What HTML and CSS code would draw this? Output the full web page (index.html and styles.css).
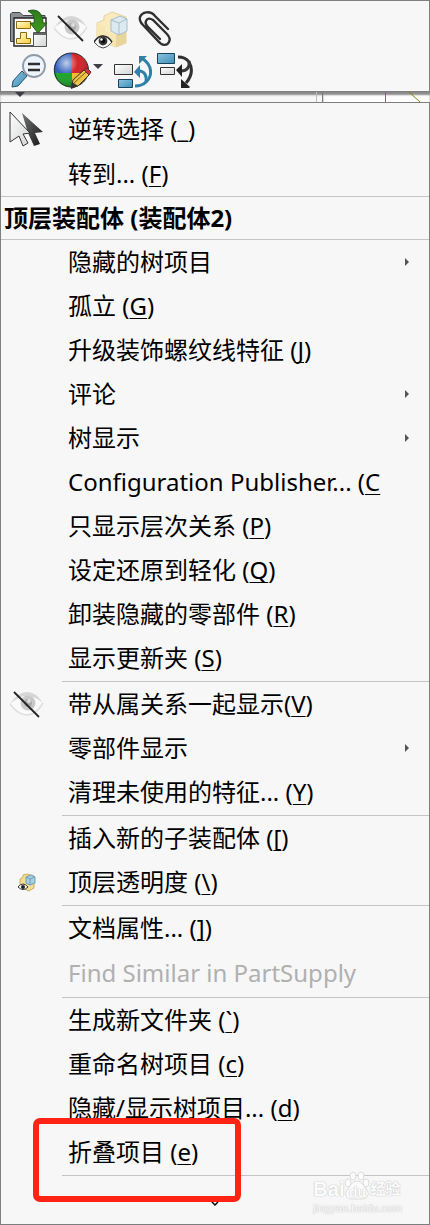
FILE: index.html
```html
<!DOCTYPE html>
<html lang="zh-CN">
<head>
<meta charset="utf-8">
<meta name="viewport" content="width=device-width, initial-scale=1">
<title>装配体2</title>
<link rel="stylesheet" href="styles.css">
</head>
<body>
<svg class="defs" aria-hidden="true">
  <defs>
    <linearGradient id="gold" x1="0" y1="0" x2="1" y2="1"><stop offset="0" stop-color="#fffbe0"/><stop offset="1" stop-color="#ffcf33"/></linearGradient>
    <linearGradient id="steel" x1="0" y1="0" x2="1" y2="1"><stop offset="0" stop-color="#8cc3e0"/><stop offset="1" stop-color="#3f8fb5"/></linearGradient>
    <linearGradient id="pale" x1="0" y1="0" x2="1" y2="1"><stop offset="0" stop-color="#ffffff"/><stop offset="1" stop-color="#d2d4d4"/></linearGradient>
    <linearGradient id="dark" x1="0" y1="0" x2="1" y2="1"><stop offset="0" stop-color="#777"/><stop offset="1" stop-color="#151515"/></linearGradient>
    <linearGradient id="leaf" x1="0" y1="0" x2="0" y2="1"><stop offset="0" stop-color="#2f7a22"/><stop offset="1" stop-color="#3f9a1c"/></linearGradient>
    <radialGradient id="shine" cx="0.35" cy="0.3" r="0.75"><stop offset="0" stop-color="#fff" stop-opacity="0.7"/><stop offset="0.45" stop-color="#fff" stop-opacity="0.05"/><stop offset="1" stop-color="#000" stop-opacity="0.3"/></radialGradient>
    <symbol id="eye-off" viewBox="0 0 34 28">
      <path d="M0 14Q8 3 17 3T34 14Q26 25 17 25T0 14Z" fill="#fafafa"/>
      <path d="M0 14Q8 2 17 2T33 13Q25 6 17 6T0 14Z" fill="#d6d6d6"/>
      <path d="M0 14Q8 25 17 25T33 13" fill="none" stroke="#dedede" stroke-width="1.5"/>
      <circle cx="18" cy="13" r="7.5" fill="#c9c9c9"/><circle cx="18" cy="13" r="4" fill="#ababab"/><circle cx="19" cy="11" r="2" fill="#ddd"/>
      <path d="M4 2L29 27" stroke="#222" stroke-width="1.8"/>
    </symbol>
    <symbol id="part" viewBox="0 0 36 38">
      <path d="M3 12L10 9V5L18 1L32 6V32L22 36L3 29Z" fill="#f9ebbf" stroke="#e5d39a"/>
      <path d="M3 12L11 15V20L22 24V36L3 29Z" fill="#f6e6b2"/>
      <path d="M22 24L32 19V32L22 36Z" fill="#e8d59b"/>
      <path d="M17 9L26 5L33 8V20L25 24L17 20Z" fill="#dce9f0" stroke="#a4bfcd"/>
      <path d="M17 9L25 12L33 8M25 12V24" fill="none" stroke="#a4bfcd"/>
      <path d="M0 31Q4 25 9 25T18 31Q13 37 9 37T0 31Z" fill="#fff" stroke="#444"/>
      <path d="M0 31Q4 25 9 25T18 31" fill="none" stroke="#333" stroke-width="1.6"/>
      <circle cx="9" cy="30" r="4.4" fill="#333"/><circle cx="9" cy="30" r="2" fill="#000"/><circle cx="7.5" cy="28.5" r="1.2" fill="#fff"/>
    </symbol>
    <symbol id="part-small" viewBox="0 0 18 19">
      <path d="M2 6L5 4V2L9 1L16 3V15L11 18L2 14Z" fill="#f3dc93" stroke="#c9ae62"/>
      <path d="M8 4L13 2L17 4V10L12 12L8 10Z" fill="#a9cfe2" stroke="#6d9fb8"/>
      <path d="M8 4L12 6L17 4M12 6V12" fill="none" stroke="#6d9fb8"/>
      <path d="M0 14Q5 8 10 14Q5 19 0 14Z" fill="#fff" stroke="#333"/><circle cx="5" cy="14" r="2" fill="#222"/>
    </symbol>
  </defs>
</svg>

<main class="screen">
  <div class="toolbar" role="toolbar" aria-label="快捷工具">
    <div class="tool-row">
      <button class="tool" type="button" aria-label="打开零件">
        <svg viewBox="8 8 42 42"><path d="M10.500 41.500V14L12 12.500H20L23 15.500H45V20H15V41.500Z" fill="#8d9195" stroke="#444"/>
          <path d="M14 18H46V46H14Z" fill="#fff" stroke="#222" stroke-width="1.4"/>
          <path d="M16.500 21.500H30.500V28.500H16.500Z" fill="url(#gold)" stroke="#8a6a14"/>
          <path d="M20.500 32.500H26.500V38.500H30.500V43.500H16.500V38.500H20.500Z" fill="url(#gold)" stroke="#8a6a14"/>
          <path d="M33.500 32.500H46.500V46.500H33.500Z" fill="url(#pale)" stroke="#555"/><path d="M34 34H46" stroke="#666" stroke-width="2"/>
          <path d="M28 11C36 8 43 12 43 23H47L38 33L30 23H34C35 17 33 14 28 11Z" fill="url(#leaf)" stroke="#225d18"/></svg>
      </button>
      <button class="tool" type="button" aria-label="隐藏零部件"><svg viewBox="50 8 42 42"><use href="#eye-off" x="54" y="14" width="34" height="28"/></svg></button>
      <button class="tool" type="button" aria-label="更改透明度"><svg viewBox="92 8 42 42"><use href="#part" x="94" y="11" width="36" height="38"/></svg></button>
      <button class="tool" type="button" aria-label="附件">
        <svg viewBox="134 8 42 42"><path d="M168 29L155 16C150 10 142 12 140 17C139 21 141 23 143 25L158 41C162 46 167 46 169 42C171 39 169 36 166 33L153 20C150 18 147 18 146 21C145 23 146 25 148 27L160 39" fill="none" stroke="#303030" stroke-width="2.4" stroke-linecap="round"/></svg>
      </button>
    </div>
    <div class="tool-row">
      <button class="tool" type="button" aria-label="缩放到所选">
        <svg viewBox="8 50 42 42"><path d="M22 71L27 76L18 86L12 87L13 81Z" fill="url(#steel)" stroke="#1e566f"/><path d="M23 75L27 71" stroke="#888" stroke-width="2"/>
          <circle cx="34" cy="66" r="11" fill="#edf4fd" stroke="#8e9aa7" stroke-width="1.8"/><path d="M28 64H40M28 70H40" stroke="#2e2e2e" stroke-width="2.6"/></svg>
      </button>
      <button class="tool tool-split" type="button" aria-label="外观">
        <svg viewBox="50 50 54 42"><path d="M72 73V53A17 17 0 0 0 54 73Z" fill="#2858b8"/><path d="M72 73V53A17 17 0 0 1 88 73Z" fill="#d0181d"/><path d="M72 73H54A17 17 0 0 0 72 87Z" fill="#12a01e"/><path d="M72 73H88A17 17 0 0 1 72 87Z" fill="#f1bb22"/>
          <circle cx="71.500" cy="70" r="17" fill="url(#shine)" stroke="#303030"/>
          <path d="M71 88L73 80L84 70L89 75L78 86Z" fill="#edc445" stroke="#3a3524"/><path d="M74 83L86 72" stroke="#7b5d18"/><path d="M71 89L72 82L78 86Z" fill="#333"/><path d="M84 70L87 68L91 72L89 75Z" fill="#c53942" stroke="#702a30"/>
          <path d="M93 64H103L98 69Z" fill="#3e3e44"/></svg>
      </button>
      <button class="tool tool-next" type="button" aria-label="上移零部件">
        <svg viewBox="112 50 42 42"><path d="M114.500 64.500H132.500V74.500H114.500Z" fill="url(#pale)" stroke="#333"/><path d="M118.500 79.500H132.500V87.500H118.500Z" fill="url(#steel)" stroke="#14455c"/>
          <path d="M143 59C152 65 153 76 146 82C143 85 140 86 135 86" fill="none" stroke="#2f80aa" stroke-width="3"/>
          <path d="M139 71C144 71 147 75 146 82" fill="none" stroke="#2f80aa" stroke-width="3"/>
          <path d="M139 56H147L139 64ZM134 72L140 65V78Z" fill="#2f80aa"/></svg>
      </button>
      <button class="tool" type="button" aria-label="下移零部件">
        <svg viewBox="154 50 42 42"><path d="M157.500 53.500H174.500V63.500H157.500Z" fill="url(#steel)" stroke="#14455c"/><path d="M160.500 67.500H174.500V74.500H160.500Z" fill="url(#pale)" stroke="#333"/>
          <path d="M178 57C184 57 187 59 189 62C193 69 192 76 186 83" fill="none" stroke="#303030" stroke-width="3"/>
          <path d="M189 61C190 67 187 71 181 71" fill="none" stroke="#383838" stroke-width="3"/>
          <path d="M181 79L190 88H181ZM181 79L190 87L181 88ZM176 70L182 64V77Z" fill="#222"/></svg>
      </button>
    </div>
  </div>

  <div class="backdrop" aria-hidden="true">
    <div class="tree-pane"><span class="tree-arrow"></span></div>
    <div class="splitter"></div>
    <div class="view-pane"><svg class="sketch" viewBox="323 92 107 10" preserveAspectRatio="xMinYMin meet"><path d="M385.500 92V102M409 92L420 102" stroke="#7f7f0c" stroke-width="1"/></svg></div>
  </div>

  <nav class="menu" aria-label="快捷菜单">
    <button class="item item-tall" type="button"><span class="icon"><svg class="cursor" viewBox="8 109 38 38"><path d="M22 112L43 131L35 132L40 143L34 145L28 132Z" fill="url(#dark)"/><path d="M10 111L30 132L23 133L28 142L23 145L19 135L10 141Z" fill="url(#pale)" stroke="#333" stroke-linejoin="round"/></svg></span><span class="label">逆转选择 (<u>_</u>)</span></button>
    <button class="item" type="button"><span class="icon"></span><span class="label">转到... (<u>F</u>)</span></button>
    <h2 class="heading">顶层装配体 (装配体2)</h2>
    <button class="item has-sub" type="button"><span class="icon"></span><span class="label">隐藏的树项目</span></button>
    <button class="item" type="button"><span class="icon"></span><span class="label">孤立 (<u>G</u>)</span></button>
    <button class="item" type="button"><span class="icon"></span><span class="label">升级装饰螺纹线特征 (<u>J</u>)</span></button>
    <button class="item has-sub" type="button"><span class="icon"></span><span class="label">评论</span></button>
    <button class="item has-sub" type="button"><span class="icon"></span><span class="label">树显示</span></button>
    <button class="item" type="button"><span class="icon"></span><span class="label">Configuration Publisher... (<u>C</u>)</span></button>
    <button class="item" type="button"><span class="icon"></span><span class="label">只显示层次关系 (<u>P</u>)</span></button>
    <button class="item" type="button"><span class="icon"></span><span class="label">设定还原到轻化 (<u>Q</u>)</span></button>
    <button class="item" type="button"><span class="icon"></span><span class="label">卸装隐藏的零部件 (<u>R</u>)</span></button>
    <button class="item" type="button"><span class="icon"></span><span class="label">显示更新夹 (<u>S</u>)</span></button>
    <hr class="rule">
    <button class="item" type="button"><span class="icon"><svg class="eye" viewBox="0 0 34 28"><use href="#eye-off"/></svg></span><span class="label">带从属关系一起显示(<u>V</u>)</span></button>
    <button class="item has-sub" type="button"><span class="icon"></span><span class="label">零部件显示</span></button>
    <button class="item" type="button"><span class="icon"></span><span class="label">清理未使用的特征... (<u>Y</u>)</span></button>
    <hr class="rule">
    <button class="item" type="button"><span class="icon"></span><span class="label">插入新的子装配体 (<u>[</u>)</span></button>
    <button class="item" type="button"><span class="icon"><svg class="part" viewBox="0 0 18 19"><use href="#part-small"/></svg></span><span class="label">顶层透明度 (<u>\</u>)</span></button>
    <hr class="rule">
    <button class="item" type="button"><span class="icon"></span><span class="label">文档属性... (<u>]</u>)</span></button>
    <button class="item item-tall" type="button" disabled><span class="icon"></span><span class="label">Find Similar in PartSupply</span></button>
    <hr class="rule">
    <button class="item" type="button"><span class="icon"></span><span class="label">生成新文件夹 (<u>`</u>)</span></button>
    <button class="item" type="button"><span class="icon"></span><span class="label">重命名树项目 (<u>c</u>)</span></button>
    <button class="item" type="button"><span class="icon"></span><span class="label">隐藏/显示树项目... (<u>d</u>)</span></button>
    <div class="marked"><button class="item" type="button"><span class="icon"></span><span class="label">折叠项目 (<u>e</u>)</span></button></div>
    <hr class="rule">
    <button class="more" type="button" aria-label="更多"><svg viewBox="0 0 8 6"><path d="M1 1L4 4L7 1" fill="none" stroke="#000" stroke-width="1.5"/></svg></button>
    <div class="watermark">
      <div class="brand"><span>Bai</span><span class="paw"><svg viewBox="0 0 26 30"><g fill="#fcfcfc" stroke="#dcdcdc"><ellipse cx="4" cy="12" rx="3" ry="4"/><ellipse cx="9" cy="5" rx="3" ry="4"/><ellipse cx="17" cy="5" rx="3" ry="4"/><ellipse cx="22" cy="12" rx="3" ry="4"/><path d="M13 10C18 10 20 16 23 19C26 24 23 28 18 28H8C3 28 0 24 3 19C6 16 8 10 13 10Z"/></g></svg><b>du</b></span><span class="brand-cn">经验</span></div>
      <div class="site">jingyan.baidu.com</div>
    </div>
  </nav>
</main>
</body>
</html>
```

FILE: styles.css
```css
*, *::before, *::after { box-sizing: border-box; }

body {
  margin: 0;
  background: #f7f7f7;
  color: #000;
  font-family: "Noto Sans", "Noto Sans CJK SC", sans-serif;
}

button {
  margin: 0;
  padding: 0;
  border: 0;
  background: none;
  color: inherit;
  font: inherit;
}

svg { display: block; }
.defs { position: absolute; width: 0; height: 0; }

.toolbar {
  padding: 7px;
  padding-bottom: 0;
  border: 1px solid #7f7f7f;
  background: #f7f7f7;
}

.tool-row { display: flex; }
.tool { width: 42px; height: 42px; }
.tool-row + .tool-row .tool { height: 41px; }
.tool svg { width: 100%; height: 42px; }
.tool-split { width: 54px; }
.tool-next { margin-left: 8px; }

.backdrop {
  display: flex;
  height: 10px;
  box-shadow: inset 0 3px 2px #8a8a8a;
}
.tree-pane { flex: 3; padding-left: 15px; border-right: 1px solid #bdbdbd; }
.tree-arrow {
  display: block;
  width: 10px;
  border: 5px solid transparent;
  border-top-color: #3c3c44;
}
.splitter { width: 6px; border-right: 1px solid #777; }
.view-pane {
  flex: 1;
  background: #fff;
  box-shadow: inset 0 3px 2px #8a8a8a;
}
.sketch { width: 107px; height: 10px; }

.menu {
  position: relative;
  padding-top: 3px;
  border: 1px solid #7f7f7f;
  background: #f7f7f7;
  font-size: 24px;
}

.item {
  display: flex;
  align-items: center;
  width: 100%;
  height: 44px;
  padding-right: 48px;
  line-height: 44px;
  text-align: left;
}
.item-tall { height: 46px; }
.item:disabled { color: #b0b0b0; }

.icon {
  display: flex;
  flex: none;
  justify-content: center;
  width: 67px;
  padding-right: 15px;
}
.cursor { width: 38px; height: 38px; }
.eye { width: 34px; height: 28px; }
.part { width: 18px; height: 19px; }

.label {
  flex: 1;
  min-width: 0;
  overflow: hidden;
  white-space: nowrap;
}
.label u {
  text-decoration-thickness: 1px;
  text-underline-offset: 3px;
  text-decoration-skip-ink: none;
}

.has-sub { padding-right: 20px; }
.has-sub::after {
  content: "";
  width: 4px;
  border: 4px solid transparent;
  border-right: 0;
  border-left-color: #555;
}

.heading {
  margin: 0;
  padding-left: 3px;
  border: solid #c4c4c4;
  border-width: 1px 0;
  font-size: 24px;
  font-weight: 700;
  line-height: 42px;
}

.rule {
  height: 2px;
  margin: 0 0 0 61px;
  border: 0;
  border-bottom: 1px solid #c4c4c4;
}

.marked { position: relative; }
.marked::after {
  content: "";
  position: absolute;
  z-index: 1;
  top: -12px;
  left: 32px;
  width: 208px;
  height: 84px;
  border: 6px solid #ff2314;
  border-radius: 7px;
  pointer-events: none;
}

.more {
  display: flex;
  justify-content: center;
  width: 100%;
  height: 48px;
  padding-top: 25px;
}
.more svg { width: 8px; height: 6px; }

.watermark {
  position: absolute;
  right: 27px;
  bottom: 9px;
  color: #fcfcfc;
  font-family: "Liberation Sans", "Noto Sans CJK SC", sans-serif;
  text-shadow: 0 0 1px #bbb, 0 0 2px #d4d4d4;
}
.brand {
  display: flex;
  align-items: flex-end;
  font-size: 20px;
  font-weight: 700;
  line-height: 24px;
}
.paw { position: relative; width: 26px; height: 30px; }
.paw b {
  position: absolute;
  right: 0;
  bottom: 2px;
  left: 0;
  font-size: 14px;
  line-height: 14px;
  text-align: center;
}
.brand-cn { font-size: 15px; }
.site { font-size: 11px; line-height: 14px; }
```
